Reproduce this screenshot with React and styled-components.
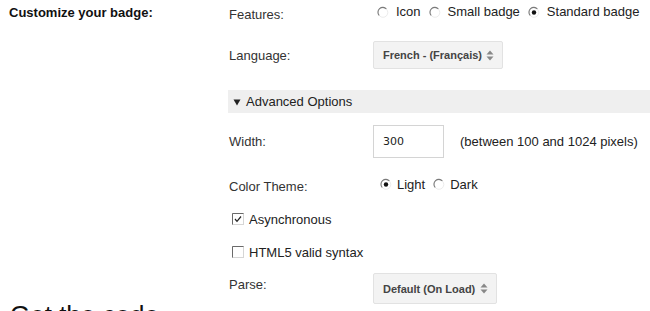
import React, { useState } from 'react';
import styled, { createGlobalStyle } from 'styled-components';

const GlobalStyle = createGlobalStyle`
  html, body {
    margin: 0;
    padding: 0;
    background: #fff;
    overflow: hidden;
  }
  body {
    font-family: "Liberation Sans", Arial, Helvetica, sans-serif;
    font-size: 13px;
    color: #333;
  }
`;

const Page = styled.div`
  padding-left: 9px;
  width: 641px;
`;

const Section = styled.section`
  display: grid;
  grid-template-columns: 220px 1fr;
  height: 289px;
`;

const SectionTitle = styled.h3`
  margin: 0;
  padding-top: 5px;
  font-size: 13px;
  line-height: 15px;
  font-weight: bold;
  color: #111;
`;

const Form = styled.div`
  display: flex;
  flex-direction: column;
`;

const Row = styled.div`
  display: grid;
  grid-template-columns: 144px 1fr;
  align-items: ${(p) => p.$align || 'center'};
  height: ${(p) => p.$height}px;
  margin-top: ${(p) => p.$gap || 0}px;
`;

const Label = styled.span`
  font-size: 13px;
  line-height: 15px;
  color: #333;
  padding-top: ${(p) => p.$offset || 0}px;
`;

const OptionGroup = styled.div`
  display: flex;
  align-items: center;
  padding-left: ${(p) => p.$indent || 4}px;
  padding-bottom: ${(p) => p.$lift || 0}px;
`;

const Option = styled.label`
  display: flex;
  align-items: center;
  gap: ${(p) => p.$space || 5}px;
  margin-right: 8px;
  font-size: 13px;
  line-height: 15px;
  color: #222;
  cursor: pointer;
`;

const SelectBox = styled.div`
  display: flex;
  align-items: center;
  box-sizing: border-box;
  width: ${(p) => p.$width}px;
  height: ${(p) => p.$h}px;
  padding: 0 8px 0 9px;
  background: #f3f3f3;
  border: 1px solid #e2e2e2;
  border-radius: 2px;
  font-size: 11px;
  font-weight: bold;
  color: #444;
  cursor: pointer;
`;

const SelectText = styled.span`
  flex: 1;
  white-space: nowrap;
`;

const TextInput = styled.input`
  box-sizing: border-box;
  width: 71px;
  height: 33px;
  padding: 0 9px;
  border: 1px solid #d4d4d4;
  border-radius: 0;
  font-family: "DejaVu Sans", Verdana, sans-serif;
  font-size: 11px;
  color: #222;
  outline: none;
`;

const InputLine = styled.div`
  display: flex;
  align-items: center;
  gap: 16px;
`;

const Hint = styled.span`
  font-size: 13px;
  color: #222;
`;

const Disclosure = styled.div`
  display: flex;
  align-items: center;
  gap: 5px;
  height: 23px;
  margin-top: 21px;
  margin-left: -1px;
  padding-left: 5px;
  background: #efefef;
  font-size: 13px;
  color: #222;
  cursor: pointer;
`;

const CheckRow = styled.label`
  display: flex;
  align-items: center;
  gap: 5px;
  height: 22px;
  margin-top: ${(p) => p.$gap}px;
  padding-left: 3px;
  font-size: 13px;
  color: #222;
  cursor: pointer;
`;

const BigTitle = styled.h2`
  margin: 11px 0 0;
  padding-left: 1px;
  font-size: 26px;
  font-weight: normal;
  line-height: 30px;
  color: #111;
`;

const Radio = ({ checked }) => (
  <svg width="12" height="12" viewBox="0 0 12 12">
    <circle cx="6" cy="6.5" r="4.8" fill="#fff" stroke="#ececec" strokeWidth="1" />
    <path d="M2.2 9.5 A4.8 4.8 0 0 1 9.4 3" fill="none" stroke="#7a7a7a" strokeWidth="1.1" />
    {checked && <circle cx="6" cy="6.5" r="2.2" fill="#111" />}
  </svg>
);

const Checkbox = ({ checked }) => (
  <svg width="12" height="12" viewBox="0 0 12 12">
    <rect x="0.5" y="0.5" width="11" height="11" fill="#fff" stroke="#d6d6d6" />
    <path d="M0.5 11.5 V0.5 H11.5" fill="none" stroke="#6a6a6a" />
    {checked && <path d="M3 6 L5 8.3 L9 3.5" fill="none" stroke="#222" strokeWidth="1.2" />}
  </svg>
);

const Arrows = () => (
  <svg width="8" height="11" viewBox="0 0 8 11">
    <path d="M4 0.5 L7.5 4.5 H0.5 Z" fill="#888" />
    <path d="M4 10.5 L7.5 6.5 H0.5 Z" fill="#888" />
  </svg>
);

const Caret = () => (
  <svg width="8" height="8" viewBox="0 0 8 8">
    <path d="M0.5 1.5 H7.5 L4 7.5 Z" fill="#222" />
  </svg>
);

const features = ['Icon', 'Small badge', 'Standard badge'];
const themes = ['Light', 'Dark'];

export default function App() {
  const [feature, setFeature] = useState('Standard badge');
  const [theme, setTheme] = useState('Light');
  const [async, setAsync] = useState(true);
  const [html5, setHtml5] = useState(false);
  const [width, setWidth] = useState('300');

  return (
    <Page>
      <GlobalStyle />
      <Section>
        <SectionTitle>Customize your badge:</SectionTitle>
        <Form>
          <Row $height={29}>
            <Label>Features:</Label>
            <OptionGroup $lift={6}>
              {features.map((f) => (
                <Option key={f} $space={7} onClick={() => setFeature(f)}>
                  <Radio checked={feature === f} />
                  {f}
                </Option>
              ))}
            </OptionGroup>
          </Row>

          <Row $height={28} $gap={12}>
            <Label>Language:</Label>
            <SelectBox $width={130} $h={28}>
              <SelectText>French - (Français)</SelectText>
              <Arrows />
            </SelectBox>
          </Row>

          <Disclosure>
            <Caret />
            Advanced Options
          </Disclosure>

          <Row $height={33} $gap={12}>
            <Label>Width:</Label>
            <InputLine>
              <TextInput value={width} onChange={(e) => setWidth(e.target.value)} />
              <Hint>(between 100 and 1024 pixels)</Hint>
            </InputLine>
          </Row>

          <Row $height={24} $gap={16}>
            <Label>Color Theme:</Label>
            <OptionGroup $indent={7} $lift={4}>
              {themes.map((t) => (
                <Option key={t} onClick={() => setTheme(t)}>
                  <Radio checked={theme === t} />
                  {t}
                </Option>
              ))}
            </OptionGroup>
          </Row>

          <CheckRow $gap={10} onClick={() => setAsync(!async)}>
            <Checkbox checked={async} />
            Asynchronous
          </CheckRow>

          <CheckRow $gap={11} onClick={() => setHtml5(!html5)}>
            <Checkbox checked={html5} />
            HTML5 valid syntax
          </CheckRow>

          <Row $height={31} $gap={10} $align="start">
            <Label $offset={4}>Parse:</Label>
            <SelectBox $width={124} $h={31}>
              <SelectText>Default (On Load)</SelectText>
              <Arrows />
            </SelectBox>
          </Row>
        </Form>
      </Section>
      <BigTitle>Get the code</BigTitle>
    </Page>
  );
}
